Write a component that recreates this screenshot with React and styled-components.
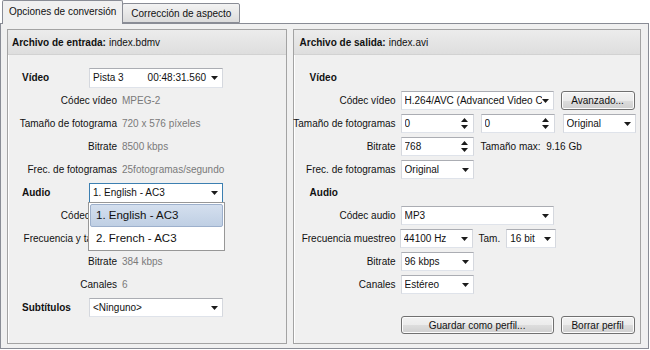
import React from 'react'
import styled, { createGlobalStyle } from 'styled-components'

const GlobalStyle = createGlobalStyle`
  html, body {
    margin: 0;
    padding: 0;
    background: #ffffff;
  }
  body {
    font-family: Tahoma, 'Liberation Sans', Arial, sans-serif;
    font-size: 10px;
    color: #111;
  }
`

const Window = styled.div`
  width: 650px;
  height: 350px;
  display: flex;
  flex-direction: column;
  overflow: hidden;
  box-sizing: border-box;
`

const TabBar = styled.div`
  height: 23px;
  display: flex;
  align-items: flex-end;
  padding-left: 2px;
  position: relative;
  z-index: 1;
`

const Tab = styled.div`
  box-sizing: border-box;
  height: ${(p) => (p.active ? '24px' : '20px')};
  margin-bottom: ${(p) => (p.active ? '-1px' : '0')};
  padding: ${(p) => (p.active ? '5px 6px 0 6px' : '4px 8px 0 8px')};
  border: 1px solid #898c95;
  border-bottom: ${(p) => (p.active ? 'none' : '1px solid #898c95')};
  margin-left: ${(p) => (p.active ? '0' : '-1px')};
  background: ${(p) => (p.active ? '#f0f0f0' : 'linear-gradient(#f3f3f3, #dcdcdc)')};
  border-radius: 2px 2px 0 0;
  white-space: nowrap;
`

const TabPage = styled.div`
  flex: 1;
  box-sizing: border-box;
  border: 1px solid #898c95;
  background: #f0f0f0;
  margin: 0 1px 1px 0;
  padding: 5px 7px 4px 6px;
  display: flex;
  gap: 6px;
`

const Panel = styled.section`
  box-sizing: border-box;
  width: ${(p) => p.width}px;
  height: 315px;
  border: 1px solid #a3a3a3;
  box-shadow: inset 1px 1px 0 #ffffff;
  display: flex;
  flex-direction: column;
`

const PanelHeader = styled.div`
  height: 24px;
  display: flex;
  align-items: center;
  padding-left: ${(p) => p.pad}px;
  background: linear-gradient(#ececec, #dedede);
  border-bottom: 1px solid #d2d2d2;
  white-space: nowrap;
  b {
    margin-right: 3px;
  }
`

const PanelBody = styled.div`
  flex: 1;
  display: flex;
  flex-direction: column;
  padding-top: 11px;
  padding-left: ${(p) => p.pad}px;
`

const Row = styled.div`
  height: 23px;
  display: flex;
  align-items: center;
  gap: ${(p) => p.gap ?? 5}px;
  position: relative;
`

const SectionLabel = styled.div`
  font-weight: bold;
  width: ${(p) => (p.width ? `${p.width}px` : 'auto')};
  padding-left: ${(p) => p.indent || 0}px;
  flex-shrink: 0;
`

const FieldLabel = styled.div`
  width: ${(p) => p.width}px;
  display: flex;
  justify-content: flex-end;
  white-space: nowrap;
  flex-shrink: 0;
  margin-right: ${(p) => p.mr || 0}px;
`

const Value = styled.div`
  color: #7a7a7a;
  white-space: nowrap;
`

const Plain = styled.div`
  white-space: nowrap;
`

const Combo = styled.div`
  box-sizing: border-box;
  width: ${(p) => p.width}px;
  height: ${(p) => p.height || 19}px;
  flex-shrink: 0;
  background: #ffffff;
  border: 1px solid;
  border-color: ${(p) => (p.focused ? '#3c7fb1' : '#abadb3 #d5d8de #dfe3ea #d5d8de')};
  display: flex;
  align-items: center;
  padding: 0 4px 0 3px;
  position: relative;
  white-space: nowrap;
  margin-left: ${(p) => p.ml || 0}px;
`

const ComboText = styled.div`
  flex: 1;
  overflow: hidden;
  display: flex;
  justify-content: space-between;
  padding-right: 5px;
`

const Arrow = () => (
  <svg width="7" height="4" viewBox="0 0 7 4" style={{ flexShrink: 0 }}>
    <path d="M0 0 H7 L3.5 4 Z" fill="#1b1b1b" />
  </svg>
)

const SpinArrows = () => (
  <svg width="7" height="11" viewBox="0 0 7 11" style={{ flexShrink: 0 }}>
    <path d="M3.5 0 L7 4 H0 Z" fill="#1b1b1b" />
    <path d="M0 7 H7 L3.5 11 Z" fill="#1b1b1b" />
  </svg>
)

const Spin = styled(Combo)`
  padding-right: 5px;
`

const Button = styled.button`
  box-sizing: border-box;
  width: ${(p) => p.width}px;
  height: ${(p) => p.height || 19}px;
  flex-shrink: 0;
  border: 1px solid #707070;
  border-radius: 3px;
  background: linear-gradient(#f2f2f2 0%, #ebebeb 50%, #dddddd 51%, #cfcfcf 100%);
  box-shadow: inset 0 0 0 1px #fcfcfc;
  font-family: Tahoma, 'Liberation Sans', Arial, sans-serif;
  font-size: 10px;
  color: #111;
  padding: 0;
`

const DropList = styled.div`
  position: absolute;
  left: -2px;
  top: 18px;
  width: 137px;
  box-sizing: border-box;
  background: #ffffff;
  border: 1px solid #979797;
  padding: 1px;
  z-index: 5;
  font-size: 11.5px;
`

const DropItem = styled.div`
  box-sizing: border-box;
  height: ${(p) => (p.selected ? 23 : 22)}px;
  display: flex;
  align-items: center;
  padding-left: 5px;
  border: 1px solid ${(p) => (p.selected ? '#9db0cc' : 'transparent')};
  border-radius: 2px;
  background: ${(p) => (p.selected ? 'linear-gradient(#d4dfee, #bfcfe4)' : 'transparent')};
`

const Spacer = styled.div`
  flex: 1;
`

const ButtonRow = styled.div`
  display: flex;
  gap: 7px;
  padding-left: 107px;
  margin-bottom: 9px;
`

const LW = 95

const Detail = ({ label, value }) => (
  <Row>
    <FieldLabel width={LW}><span>{label}</span></FieldLabel>
    {value && <Value>{value}</Value>}
  </Row>
)

const OutField = ({ label, children, gap }) => (
  <Row gap={gap ?? 7}>
    <FieldLabel width={102} mr={-2}><span>{label}</span></FieldLabel>
    {children}
  </Row>
)

const App = () => (
  <>
    <GlobalStyle />
    <Window>
      <TabBar>
        <Tab active>Opciones de conversión</Tab>
        <Tab>Corrección de aspecto</Tab>
      </TabBar>
      <TabPage>
        <Panel width={280}>
          <PanelHeader pad={4}>
            <b>Archivo de entrada:</b> index.bdmv
          </PanelHeader>
          <PanelBody pad={14}>
            <Row gap={0}>
              <SectionLabel width={67}>Vídeo</SectionLabel>
              <Combo width={134} height={20}>
                <ComboText>
                  <span>Pista 3</span>
                  <span>00:48:31.560</span>
                </ComboText>
                <Arrow />
              </Combo>
            </Row>
            <Detail label="Códec vídeo" value="MPEG-2" />
            <Detail label="Tamaño de fotograma" value="720 x 576 píxeles" />
            <Detail label="Bitrate" value="8500 kbps" />
            <Detail label="Frec. de fotogramas" value="25fotogramas/segundo" />
            <Row gap={0} style={{ zIndex: 3 }}>
              <SectionLabel width={67}>Audio</SectionLabel>
              <Combo width={134} height={20} focused>
                <ComboText>1. English - AC3</ComboText>
                <Arrow />
                <DropList>
                  <DropItem selected>1. English - AC3</DropItem>
                  <DropItem>2. French - AC3</DropItem>
                </DropList>
              </Combo>
            </Row>
            <Detail label="Códec audio" />
            <Detail label="Frecuencia y tamaño" />
            <Detail label="Bitrate" value="384 kbps" />
            <Detail label="Canales" value="6" />
            <Row gap={0}>
              <SectionLabel width={67}>Subtítulos</SectionLabel>
              <Combo width={134} height={19}>
                <ComboText>&lt;Ninguno&gt;</ComboText>
                <Arrow />
              </Combo>
            </Row>
          </PanelBody>
        </Panel>

        <Panel width={349}>
          <PanelHeader pad={6}>
            <b>Archivo de salida:</b> index.avi
          </PanelHeader>
          <PanelBody pad={0}>
            <Row>
              <SectionLabel indent={16}>Vídeo</SectionLabel>
            </Row>
            <OutField label="Códec vídeo">
              <Combo width={153}>
                <ComboText>H.264/AVC (Advanced Video C</ComboText>
                <Arrow />
              </Combo>
              <Button width={74}>Avanzado...</Button>
            </OutField>
            <OutField label="Tamaño de fotogramas">
              <Spin width={73}>
                <ComboText>0</ComboText>
                <SpinArrows />
              </Spin>
              <Spin width={74}>
                <ComboText>0</ComboText>
                <SpinArrows />
              </Spin>
              <Combo width={73} ml={1}>
                <ComboText>Original</ComboText>
                <Arrow />
              </Combo>
            </OutField>
            <OutField label="Bitrate">
              <Spin width={73}>
                <ComboText>768</ComboText>
                <SpinArrows />
              </Spin>
              <Plain>Tamaño max:&nbsp; 9.16 Gb</Plain>
            </OutField>
            <OutField label="Frec. de fotogramas">
              <Combo width={73}>
                <ComboText>Original</ComboText>
                <Arrow />
              </Combo>
            </OutField>
            <Row>
              <SectionLabel indent={16}>Audio</SectionLabel>
            </Row>
            <OutField label="Códec audio">
              <Combo width={153}>
                <ComboText>MP3</ComboText>
                <Arrow />
              </Combo>
            </OutField>
            <OutField label="Frecuencia muestreo" gap={6}>
              <Combo width={73}>
                <ComboText>44100 Hz</ComboText>
                <Arrow />
              </Combo>
              <Plain>Tam.</Plain>
              <Combo width={50}>
                <ComboText>16 bit</ComboText>
                <Arrow />
              </Combo>
            </OutField>
            <OutField label="Bitrate">
              <Combo width={73}>
                <ComboText>96 kbps</ComboText>
                <Arrow />
              </Combo>
            </OutField>
            <OutField label="Canales">
              <Combo width={73}>
                <ComboText>Estéreo</ComboText>
                <Arrow />
              </Combo>
            </OutField>
            <Spacer />
            <ButtonRow>
              <Button width={153} height={18}>Guardar como perfil...</Button>
              <Button width={74} height={18}>Borrar perfil</Button>
            </ButtonRow>
          </PanelBody>
        </Panel>
      </TabPage>
    </Window>
  </>
)

export default App
